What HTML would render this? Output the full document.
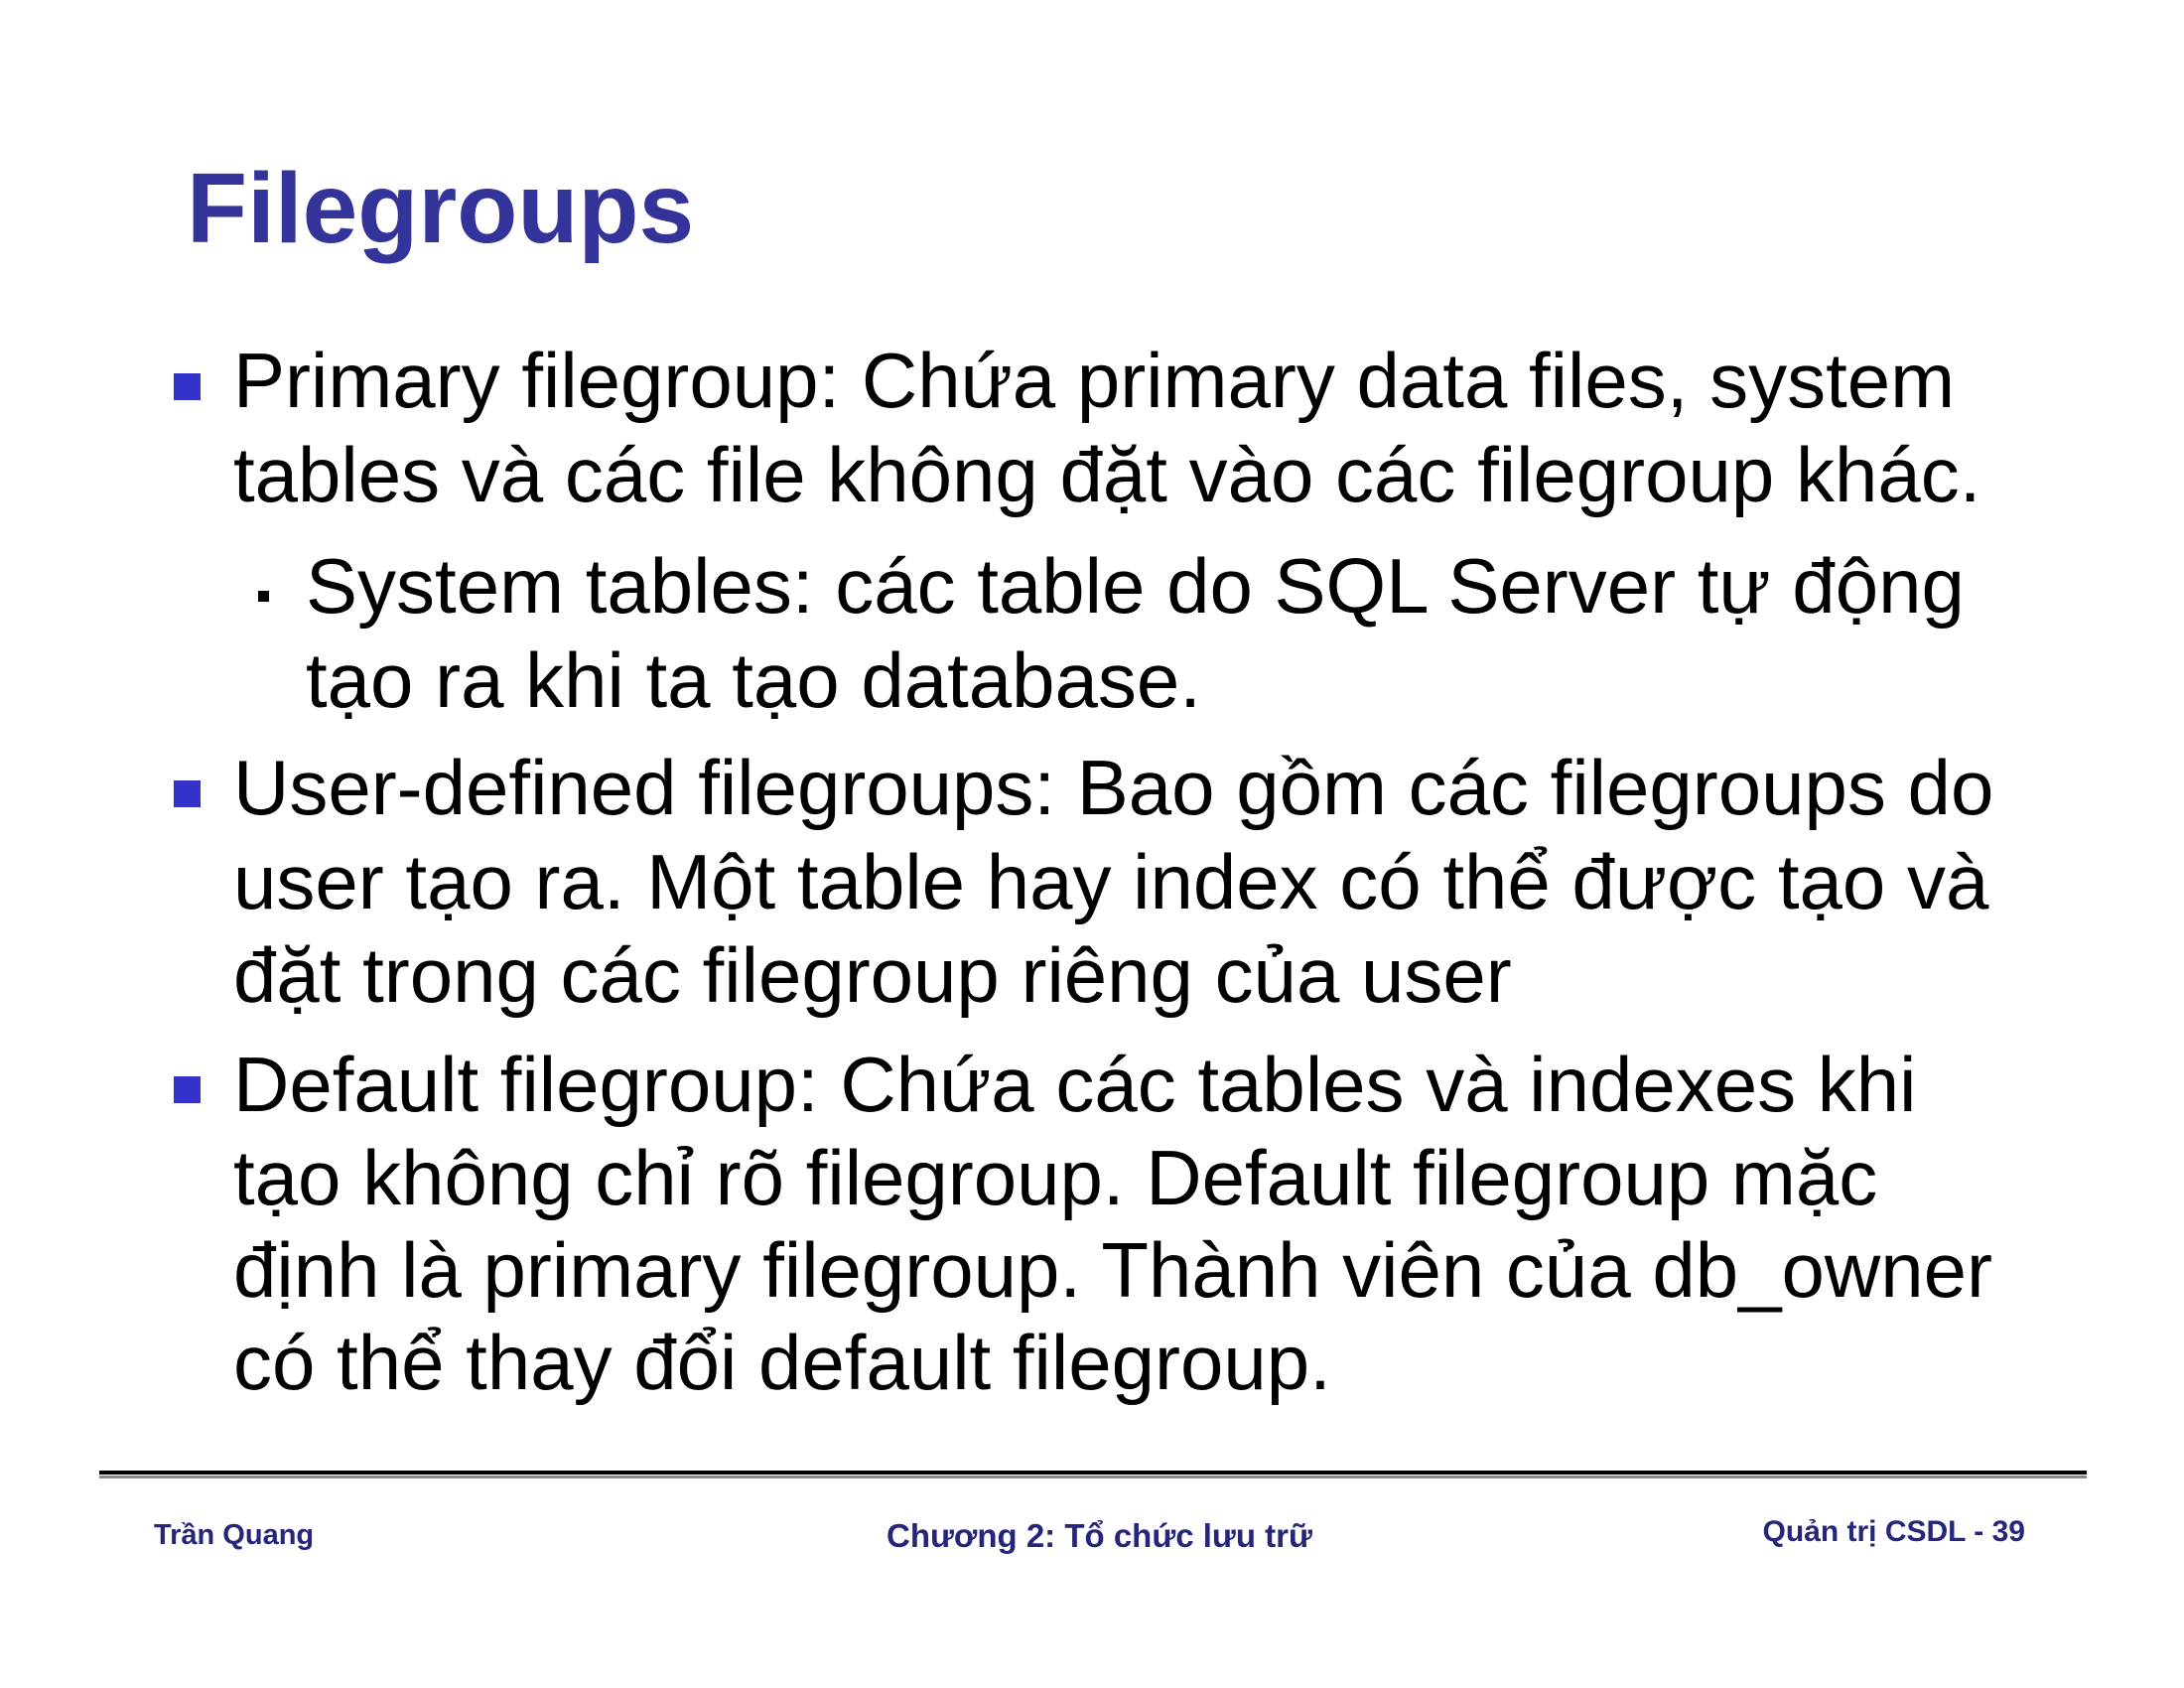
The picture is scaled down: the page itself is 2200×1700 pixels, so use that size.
<!DOCTYPE html>
<html><head><meta charset="utf-8"><style>
body{margin:0;width:2200px;height:1700px;background:#fff;position:relative;overflow:hidden;font-family:"Liberation Sans",Arial,sans-serif}
.t{position:absolute;left:188px;top:150px;font-size:100px;font-weight:bold;color:#333399;line-height:120px}
.l{position:absolute;left:235px;font-size:78px;line-height:96px;white-space:nowrap;color:#000}
.s{left:308px;font-size:78px}
.b{position:absolute;left:175px;width:27px;height:27px;background:#3333cc}
.sb{position:absolute;left:260px;width:11px;height:11px;background:#000}
.f{position:absolute;font-size:29px;font-weight:bold;color:#25257a;white-space:nowrap}
</style></head><body>
<div class="t">Filegroups</div>
<div class="b" style="top:376px"></div>
<div class="l" style="top:335px">Primary filegroup: Chứa primary data files, system</div>
<div class="l" style="top:430px">tables và các file không đặt vào các filegroup khác.</div>
<div class="sb" style="top:595px"></div>
<div class="l s" style="top:542px">System tables: các table do SQL Server tự động</div>
<div class="l s" style="top:637px">tạo ra khi ta tạo database.</div>
<div class="b" style="top:786px"></div>
<div class="l" style="top:745px">User-defined filegroups: Bao gồm các filegroups do</div>
<div class="l" style="top:840px">user tạo ra. Một table hay index có thể được tạo và</div>
<div class="l" style="top:934px">đặt trong các filegroup riêng của user</div>
<div class="b" style="top:1084px"></div>
<div class="l" style="top:1044px">Default filegroup: Chứa các tables và indexes khi</div>
<div class="l" style="top:1138px">tạo không chỉ rõ filegroup. Default filegroup mặc</div>
<div class="l" style="top:1231px">định là primary filegroup. Thành viên của db_owner</div>
<div class="l" style="top:1324px">có thể thay đổi default filegroup.</div>
<div style="position:absolute;left:100px;top:1481px;width:2002px;height:4px;background:#000"></div>
<div style="position:absolute;left:100px;top:1486px;width:2002px;height:3px;background:#888"></div>
<div class="f" style="left:155px;top:1530px">Trần Quang</div>
<div class="f" style="left:893px;top:1528px;font-size:33px">Chương 2: Tổ chức lưu trữ</div>
<div class="f" style="right:160px;top:1526px;font-size:30px">Quản trị CSDL - 39</div>
</body></html>
